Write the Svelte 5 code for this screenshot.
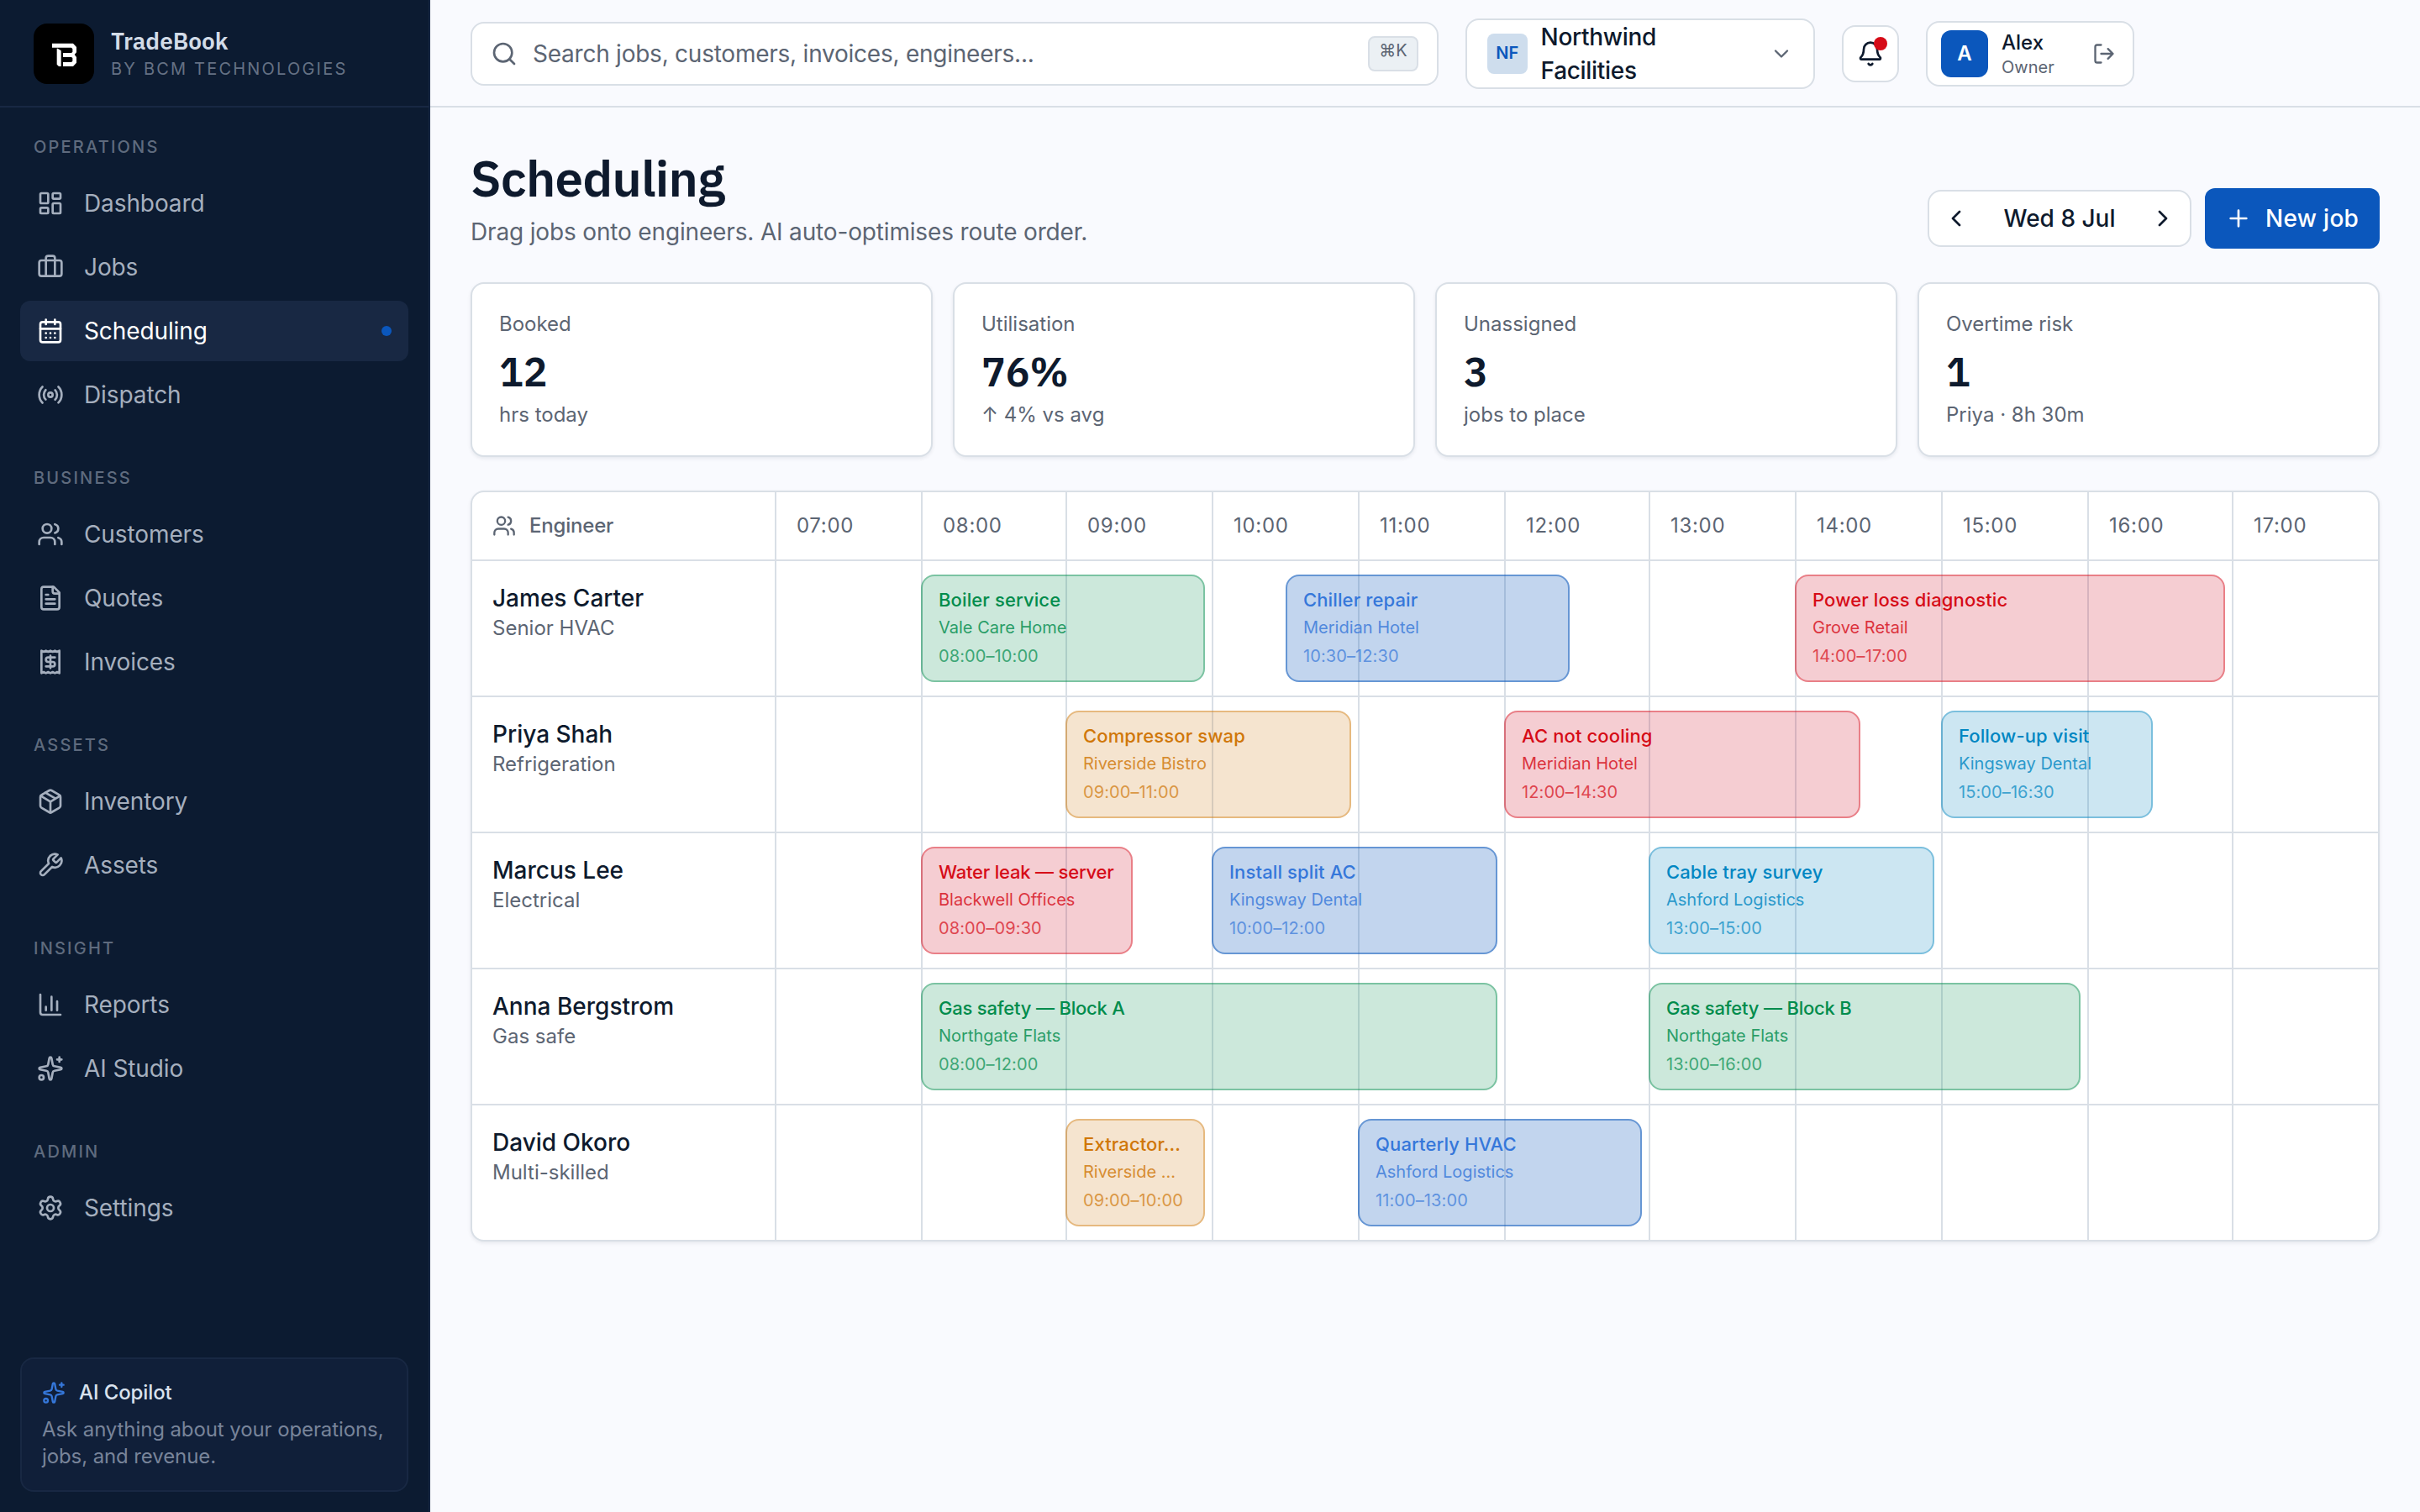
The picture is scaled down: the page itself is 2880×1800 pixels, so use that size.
<script lang="ts">
	const icons: Record<string, string> = {
		dashboard:
			'<rect width="7" height="9" x="3" y="3" rx="1"/><rect width="7" height="5" x="14" y="3" rx="1"/><rect width="7" height="9" x="14" y="12" rx="1"/><rect width="7" height="5" x="3" y="16" rx="1"/>',
		jobs: '<path d="M16 20V4a2 2 0 0 0-2-2h-4a2 2 0 0 0-2 2v16"/><rect width="20" height="14" x="2" y="6" rx="2"/>',
		calendar:
			'<rect width="18" height="18" x="3" y="4" rx="2"/><path d="M16 2v4M3 10h18M8 2v4M8 14h.01M12 14h.01M16 14h.01M8 18h.01M12 18h.01M16 18h.01"/>',
		radio:
			'<path d="M4.9 19.1C1 15.2 1 8.8 4.9 4.9M7.8 16.2c-2.3-2.3-2.3-6.1 0-8.5"/><circle cx="12" cy="12" r="2"/><path d="M16.2 7.8c2.3 2.3 2.3 6.1 0 8.5M19.1 4.9C23 8.8 23 15.1 19.1 19"/>',
		users:
			'<path d="M16 21v-2a4 4 0 0 0-4-4H6a4 4 0 0 0-4 4v2"/><circle cx="9" cy="7" r="4"/><path d="M22 21v-2a4 4 0 0 0-3-3.87M16 3.13a4 4 0 0 1 0 7.75"/>',
		file: '<path d="M15 2H6a2 2 0 0 0-2 2v16a2 2 0 0 0 2 2h12a2 2 0 0 0 2-2V7Z"/><path d="M14 2v4a2 2 0 0 0 2 2h4"/><path d="M10 9H8M16 13H8M16 17H8"/>',
		receipt:
			'<path d="M4 2v20l2-1 2 1 2-1 2 1 2-1 2 1 2-1 2 1V2l-2 1-2-1-2 1-2-1-2 1-2-1-2 1Z"/><path d="M16 8h-6a2 2 0 1 0 0 4h4a2 2 0 1 1 0 4H8M12 17.5v-11"/>',
		box: '<path d="M11 21.73a2 2 0 0 0 2 0l7-4A2 2 0 0 0 21 16V8a2 2 0 0 0-1-1.73l-7-4a2 2 0 0 0-2 0l-7 4A2 2 0 0 0 3 8v8a2 2 0 0 0 1 1.73z"/><path d="M12 22V12"/><path d="m3.3 7 7.703 4.734a2 2 0 0 0 1.994 0L20.7 7M7.5 4.27l9 5.15"/>',
		wrench:
			'<path d="M14.7 6.3a1 1 0 0 0 0 1.4l1.6 1.6a1 1 0 0 0 1.4 0l3.77-3.77a6 6 0 0 1-7.94 7.94l-6.91 6.91a2.12 2.12 0 0 1-3-3l6.91-6.91a6 6 0 0 1 7.94-7.94l-3.76 3.76z"/>',
		chart: '<path d="M3 3v16a2 2 0 0 0 2 2h16M18 17V9M13 17V5M8 17v-3"/>',
		sparkles:
			'<path d="M11.017 2.814a1 1 0 0 1 1.966 0l1.051 5.558a2 2 0 0 0 1.594 1.594l5.558 1.051a1 1 0 0 1 0 1.966l-5.558 1.051a2 2 0 0 0-1.594 1.594l-1.051 5.558a1 1 0 0 1-1.966 0l-1.051-5.558a2 2 0 0 0-1.594-1.594l-5.558-1.051a1 1 0 0 1 0-1.966l5.558-1.051a2 2 0 0 0 1.594-1.594z"/><path d="M20 2v4M22 4h-4"/><circle cx="4" cy="20" r="2"/>',
		settings:
			'<path d="M9.671 4.136a2.34 2.34 0 0 1 4.659 0 2.34 2.34 0 0 0 3.319 1.915 2.34 2.34 0 0 1 2.33 4.033 2.34 2.34 0 0 0 0 3.831 2.34 2.34 0 0 1-2.33 4.033 2.34 2.34 0 0 0-3.319 1.915 2.34 2.34 0 0 1-4.659 0 2.34 2.34 0 0 0-3.32-1.915 2.34 2.34 0 0 1-2.33-4.033 2.34 2.34 0 0 0 0-3.831A2.34 2.34 0 0 1 6.35 6.051a2.34 2.34 0 0 0 3.319-1.915"/><circle cx="12" cy="12" r="3"/>',
		search: '<path d="m21 21-4.34-4.34"/><circle cx="11" cy="11" r="8"/>',
		down: '<path d="m6 9 6 6 6-6"/>',
		left: '<path d="m15 18-6-6 6-6"/>',
		right: '<path d="m9 18 6-6-6-6"/>',
		plus: '<path d="M5 12h14M12 5v14"/>',
		bell: '<path d="M10.268 21a2 2 0 0 0 3.464 0"/><path d="M3.262 15.326A1 1 0 0 0 4 17h16a1 1 0 0 0 .74-1.673C19.41 13.956 18 12.499 18 8A6 6 0 0 0 6 8c0 4.499-1.411 5.956-2.738 7.326"/>',
		logout: '<path d="m16 17 5-5-5-5M21 12H9M9 21H5a2 2 0 0 1-2-2V5a2 2 0 0 1 2-2h4"/>'
	};

	const sections = [
		{
			title: 'Operations',
			items: [
				{ label: 'Dashboard', icon: 'dashboard' },
				{ label: 'Jobs', icon: 'jobs' },
				{ label: 'Scheduling', icon: 'calendar' },
				{ label: 'Dispatch', icon: 'radio' }
			]
		},
		{
			title: 'Business',
			items: [
				{ label: 'Customers', icon: 'users' },
				{ label: 'Quotes', icon: 'file' },
				{ label: 'Invoices', icon: 'receipt' }
			]
		},
		{
			title: 'Assets',
			items: [
				{ label: 'Inventory', icon: 'box' },
				{ label: 'Assets', icon: 'wrench' }
			]
		},
		{
			title: 'Insight',
			items: [
				{ label: 'Reports', icon: 'chart' },
				{ label: 'AI Studio', icon: 'sparkles' }
			]
		},
		{ title: 'Admin', items: [{ label: 'Settings', icon: 'settings' }] }
	];

	const stats = [
		{ label: 'Booked', value: '12', note: 'hrs today' },
		{ label: 'Utilisation', value: '76%', note: '↑ 4% vs avg' },
		{ label: 'Unassigned', value: '3', note: 'jobs to place' },
		{ label: 'Overtime risk', value: '1', note: 'Priya · 8h 30m' }
	];

	const firstHour = 7;
	const trackWidth = 1908;
	const hours = Array.from({ length: 11 }, (_, i) => firstHour + i);

	const engineers = [
		{
			name: 'James Carter',
			role: 'Senior HVAC',
			jobs: [
				{ title: 'Boiler service', client: 'Vale Care Home', start: 8, end: 10, tone: 'green' },
				{ title: 'Chiller repair', client: 'Meridian Hotel', start: 10.5, end: 12.5, tone: 'blue' },
				{ title: 'Power loss diagnostic', client: 'Grove Retail', start: 14, end: 17, tone: 'red' }
			]
		},
		{
			name: 'Priya Shah',
			role: 'Refrigeration',
			jobs: [
				{ title: 'Compressor swap', client: 'Riverside Bistro', start: 9, end: 11, tone: 'orange' },
				{ title: 'AC not cooling', client: 'Meridian Hotel', start: 12, end: 14.5, tone: 'red' },
				{ title: 'Follow-up visit', client: 'Kingsway Dental', start: 15, end: 16.5, tone: 'cyan' }
			]
		},
		{
			name: 'Marcus Lee',
			role: 'Electrical',
			jobs: [
				{ title: 'Water leak — server', client: 'Blackwell Offices', start: 8, end: 9.5, tone: 'red' },
				{ title: 'Install split AC', client: 'Kingsway Dental', start: 10, end: 12, tone: 'blue' },
				{ title: 'Cable tray survey', client: 'Ashford Logistics', start: 13, end: 15, tone: 'cyan' }
			]
		},
		{
			name: 'Anna Bergstrom',
			role: 'Gas safe',
			jobs: [
				{ title: 'Gas safety — Block A', client: 'Northgate Flats', start: 8, end: 12, tone: 'green' },
				{ title: 'Gas safety — Block B', client: 'Northgate Flats', start: 13, end: 16, tone: 'green' }
			]
		},
		{
			name: 'David Okoro',
			role: 'Multi-skilled',
			jobs: [
				{ title: 'Extractor...', client: 'Riverside ...', start: 9, end: 10, tone: 'orange' },
				{ title: 'Quarterly HVAC', client: 'Ashford Logistics', start: 11, end: 13, tone: 'blue' }
			]
		}
	];

	let active = 'Scheduling';

	function clock(h: number) {
		const hh = String(Math.floor(h)).padStart(2, '0');
		return `${hh}:${h % 1 ? '30' : '00'}`;
	}

	// x of an hour on the track, kept on even pixels so the 2px lines stay sharp
	function x(h: number, offset = 0) {
		return 2 * Math.round((((h - firstHour) * trackWidth) / hours.length + offset) / 2);
	}

	const columns = hours.map((h) => `${x(h + 1) - x(h)}px`).join(' ');
</script>

{#snippet icon(name: string, size: number, stroke = 2)}
	<svg
		width={size}
		height={size}
		viewBox="0 0 24 24"
		fill="none"
		stroke="currentColor"
		stroke-width={stroke}
		stroke-linecap="round"
		stroke-linejoin="round"
		aria-hidden="true"
	>
		{@html icons[name]}
	</svg>
{/snippet}

<div class="app">
	<aside>
		<div class="brand">
			<svg class="logo" viewBox="0 0 216 216" aria-hidden="true">
				<path
					d="M66 71h75l12 13v19l-7 8 7 9v20l-12 13h-36v-15h30l4-4v-11l-4-3h-30v-15h30l4-3v-11l-4-5H66z M83 89h3l12 8v56h-8l-7-7z"
				/>
			</svg>
			<div>
				<div class="brand-name">TradeBook</div>
				<div class="brand-sub">BY BCM TECHNOLOGIES</div>
			</div>
		</div>

		<nav>
			{#each sections as section}
				<div class="section">
					<div class="section-title">{section.title}</div>
					{#each section.items as item}
						<button
							class="nav-item"
							class:active={active === item.label}
							on:click={() => (active = item.label)}
						>
							{@render icon(item.icon, 32)}
							<span>{item.label}</span>
							{#if active === item.label}
								<i class="dot"></i>
							{/if}
						</button>
					{/each}
				</div>
			{/each}
		</nav>

		<div class="copilot">
			<div class="copilot-title">
				{@render icon('sparkles', 28)}
				<span>AI Copilot</span>
			</div>
			<p>Ask anything about your operations, jobs, and revenue.</p>
		</div>
	</aside>

	<div class="page">
		<header>
			<div class="search">
				{@render icon('search', 32)}
				<span>Search jobs, customers, invoices, engineers...</span>
				<kbd>⌘K</kbd>
			</div>
			<button class="company">
				<span class="initials">NF</span>
				<span>Northwind Facilities</span>
				{@render icon('down', 28)}
			</button>
			<button class="bell" aria-label="Notifications">
				{@render icon('bell', 32)}
				<i class="badge"></i>
			</button>
			<div class="user">
				<span class="avatar">A</span>
				<div class="user-text">
					<div class="user-name">Alex</div>
					<div class="user-role">Owner</div>
				</div>
				{@render icon('logout', 28)}
			</div>
		</header>

		<main>
			<div class="heading">
				<div>
					<h1>Scheduling</h1>
					<p>Drag jobs onto engineers. AI auto-optimises route order.</p>
				</div>
				<div class="actions">
					<div class="date">
						{@render icon('left', 32)}
						<span>Wed 8 Jul</span>
						{@render icon('right', 32)}
					</div>
					<button class="new-job">
						{@render icon('plus', 32)}
						<span>New job</span>
					</button>
				</div>
			</div>

			<div class="stats">
				{#each stats as stat}
					<div class="stat">
						<div class="stat-label">{stat.label}</div>
						<div class="stat-value">{stat.value}</div>
						<div class="stat-label">{stat.note}</div>
					</div>
				{/each}
			</div>

			<div class="board">
				<div class="board-head" style="grid-template-columns: 360px {columns}">
					<div class="engineer-head">
						{@render icon('users', 28)}
						<span>Engineer</span>
					</div>
					{#each hours as hour}
						<div class="hour">{clock(hour)}</div>
					{/each}
				</div>
				{#each engineers as engineer}
					<div class="row">
						<div class="engineer">
							<div class="name">{engineer.name}</div>
							<div class="role">{engineer.role}</div>
						</div>
						<div class="track" style="grid-template-columns: {columns}">
							{#each hours as hour (hour)}
								<div class="slot"></div>
							{/each}
							{#each engineer.jobs as job}
								<div
									class="job {job.tone}"
									style="left: {x(job.start)}px; width: {x(job.end, -8) - x(job.start)}px"
								>
									<div class="job-title" class:tight={job.title.includes('—')}>{job.title}</div>
									<div class="job-client">{job.client}</div>
									<div class="job-time">{clock(job.start)}–{clock(job.end)}</div>
								</div>
							{/each}
						</div>
					</div>
				{/each}
			</div>
		</main>
	</div>
</div>

<style>
	:global(body) {
		background: #f9fafe;
	}

	.app {
		display: flex;
		height: 1800px;
		font-family: Inter, 'Liberation Sans', sans-serif;
		font-size: 28px;
		line-height: 40px;
		color: #0e1a2d;
		background: #f9fafe;
	}

	.app * {
		box-sizing: border-box;
	}

	svg {
		display: block;
		flex: none;
	}

	button {
		font: inherit;
		color: inherit;
		background: none;
		border: 0;
		padding: 0;
		margin: 0;
		text-align: left;
		cursor: pointer;
	}

	p,
	h1 {
		margin: 0;
	}

	aside {
		display: flex;
		flex-direction: column;
		flex: none;
		width: 512px;
		background: #0c1b31;
		border-right: 2px solid #182843;
	}

	.brand {
		display: flex;
		align-items: center;
		gap: 20px;
		height: 128px;
		padding: 2px 40px 0;
		border-bottom: 2px solid #182843;
	}

	.logo {
		width: 72px;
		height: 72px;
		border-radius: 16px;
		background: #000;
		fill: #fff;
	}

	.brand-name {
		font-family: 'IBM Plex Sans', 'Noto Sans', sans-serif;
		font-weight: 600;
		line-height: 35px;
		color: #d3dce8;
	}

	.brand-sub {
		padding-top: 1px;
		font-size: 20px;
		line-height: 30px;
		letter-spacing: 2.2px;
		color: #657184;
	}

	nav {
		display: flex;
		flex-direction: column;
		flex: 1;
		gap: 48px;
		padding: 32px 24px;
	}

	.section {
		display: flex;
		flex-direction: column;
		gap: 4px;
	}

	.section-title {
		padding: 0 16px;
		margin-bottom: 12px;
		font-size: 20px;
		font-weight: 500;
		line-height: 30px;
		letter-spacing: 2.2px;
		text-transform: uppercase;
		color: #5f6b7e;
	}

	.nav-item {
		display: flex;
		align-items: center;
		gap: 24px;
		height: 72px;
		padding: 0 20px;
		border-radius: 12px;
		letter-spacing: -0.1px;
		color: #a5afbe;
	}

	.nav-item.active {
		background: #182843;
		color: #fff;
	}

	.dot {
		width: 12px;
		height: 12px;
		margin-left: auto;
		border-radius: 50%;
		background: #0b57bc;
	}

	.copilot {
		height: 160px;
		margin: 0 24px 24px;
		padding: 20px 24px;
		border: 2px solid #182843;
		border-radius: 16px;
		background: #101f39;
	}

	.copilot-title {
		display: flex;
		align-items: center;
		gap: 16px;
		font-size: 24px;
		font-weight: 500;
		letter-spacing: -0.1px;
		color: #d9e2ee;
	}

	.copilot-title svg {
		color: #3577da;
	}

	.copilot p {
		margin-top: 8px;
		font-size: 24px;
		line-height: 32px;
		letter-spacing: -0.1px;
		color: #78849a;
	}

	.page {
		flex: 1;
		min-width: 0;
	}

	header {
		display: flex;
		align-items: center;
		gap: 32px;
		height: 128px;
		padding: 2px 48px 0;
		border-bottom: 2px solid #d9dfe6;
	}

	.search,
	.company,
	.bell,
	.user,
	.date,
	.stat,
	.board {
		border: 2px solid #d9dfe6;
		background: #fff;
	}

	.search {
		display: flex;
		align-items: center;
		gap: 18px;
		width: 1152px;
		height: 76px;
		padding: 0 22px;
		border-radius: 16px;
		letter-spacing: -0.24px;
		color: #5c6573;
	}

	.search kbd {
		width: 60px;
		height: 42px;
		margin-left: auto;
		border: 2px solid #d9dfe6;
		border-radius: 8px;
		background: #ebf0f4;
		font-family: Inter, sans-serif;
		font-size: 20px;
		line-height: 30px;
		letter-spacing: 0;
		text-align: center;
	}

	.company {
		display: flex;
		align-items: center;
		gap: 16px;
		width: 416px;
		height: 84px;
		padding: 0 24px;
		border-radius: 16px;
		font-weight: 450;
		letter-spacing: -0.3px;
	}

	.company svg {
		margin-left: auto;
		color: #5c6573;
	}

	.initials {
		width: 48px;
		height: 48px;
		border-radius: 8px;
		background: #cedded;
		color: #0b57bc;
		font-size: 20px;
		font-weight: 600;
		line-height: 46px;
		letter-spacing: 0;
		text-align: center;
	}

	.bell {
		display: grid;
		place-items: center;
		position: relative;
		width: 68px;
		height: 68px;
		border-radius: 16px;
	}

	.badge {
		position: absolute;
		top: 12px;
		right: 12px;
		width: 16px;
		height: 16px;
		border-radius: 50%;
		background: #d60b17;
	}

	.user {
		display: flex;
		align-items: center;
		width: 248px;
		height: 78px;
		padding: 0 20px 0 16px;
		border-radius: 16px;
	}

	.avatar {
		width: 56px;
		height: 56px;
		margin-right: 16px;
		border-radius: 12px;
		background: #0b57bc;
		color: #fff;
		font-size: 24px;
		font-weight: 600;
		line-height: 56px;
		text-align: center;
	}

	.user-text {
		padding-top: 1px;
	}

	.user-name {
		font-size: 24px;
		font-weight: 450;
		line-height: 30px;
	}

	.user-role {
		font-size: 20px;
		line-height: 28px;
		color: #5c6573;
	}

	.user svg {
		margin-left: auto;
		color: #5c6573;
	}

	main {
		padding: 48px;
	}

	.heading {
		display: flex;
		align-items: flex-end;
		justify-content: space-between;
		height: 120px;
	}

	h1 {
		font-family: 'IBM Plex Sans', 'Noto Sans', sans-serif;
		font-size: 60px;
		font-weight: 600;
		line-height: 72px;
		letter-spacing: -0.75px;
	}

	.heading p {
		margin-top: 8px;
		letter-spacing: -0.16px;
		color: #5c6573;
	}

	.actions {
		display: flex;
		align-items: center;
		gap: 16px;
	}

	.date {
		display: flex;
		align-items: center;
		justify-content: space-between;
		width: 314px;
		height: 68px;
		padding: 0 16px;
		border-radius: 16px;
		font-weight: 450;
	}

	.new-job {
		display: flex;
		align-items: center;
		gap: 16px;
		width: 208px;
		height: 72px;
		padding: 0 24px;
		border-radius: 12px;
		background: #0b57bc;
		color: #fff;
		font-weight: 450;
		letter-spacing: 0.3px;
	}

	.stats {
		display: grid;
		grid-template-columns: repeat(4, 1fr);
		gap: 24px;
		margin-top: 40px;
	}

	.stat {
		height: 208px;
		padding: 32px;
		border-radius: 16px;
		box-shadow: 0 2px 4px rgba(14, 26, 45, 0.08);
	}

	.stat-label {
		font-size: 24px;
		line-height: 32px;
		color: #5c6573;
	}

	.stat-value {
		margin: 8px 0 4px;
		font-family: 'IBM Plex Sans', 'Noto Sans', sans-serif;
		font-size: 48px;
		font-weight: 600;
		line-height: 64px;
	}

	.board {
		margin-top: 40px;
		border-radius: 16px;
		overflow: hidden;
		box-shadow: 0 2px 4px rgba(14, 26, 45, 0.08);
	}

	.board-head {
		display: grid;
		height: 82px;
		border-bottom: 2px solid #d9dfe6;
		font-size: 24px;
		line-height: 80px;
		color: #5c6573;
	}

	.engineer-head {
		display: flex;
		align-items: center;
		gap: 16px;
		padding: 0 24px;
		font-weight: 500;
		letter-spacing: -0.2px;
	}

	.hour {
		padding: 0 24px;
		border-left: 2px solid #d9dfe6;
		letter-spacing: 0.7px;
	}

	.row {
		display: grid;
		grid-template-columns: 360px 1fr;
		height: 162px;
		border-bottom: 2px solid #d9dfe6;
	}

	.row:last-child {
		height: 160px;
		border-bottom: 0;
	}

	.engineer {
		padding: 24px;
	}

	.name {
		font-weight: 450;
	}

	.role {
		font-size: 24px;
		line-height: 32px;
		color: #5c6573;
	}

	.track {
		display: grid;
		position: relative;
	}

	.slot {
		border-left: 2px solid #d9dfe6;
	}

	/* jobs lie over the hour slots, placed by start time */
	.job {
		position: absolute;
		top: 16px;
		bottom: 16px;
		padding: 12px 18px 12px 19px;
		border: 2px solid;
		border-radius: 16px;
		overflow: hidden;
	}

	.job div {
		overflow: hidden;
		white-space: nowrap;
		text-overflow: ellipsis;
	}

	.job-title {
		font-size: 22px;
		font-weight: 500;
		line-height: 33px;
		letter-spacing: 0.12px;
	}

	.job-title.tight {
		letter-spacing: -0.2px;
	}

	.job-client {
		font-size: 20px;
		line-height: 33px;
		opacity: 0.8;
	}

	.job-time {
		font-size: 20px;
		line-height: 35px;
		letter-spacing: 0.1px;
		opacity: 0.7;
	}

	.green {
		color: #008c4c;
		background: rgba(0, 140, 76, 0.2);
		border-color: rgba(0, 140, 76, 0.4);
	}

	.blue {
		color: #3577da;
		background: rgba(11, 87, 188, 0.25);
		border-color: rgba(11, 87, 188, 0.5);
	}

	.red {
		color: #d60b17;
		background: rgba(207, 7, 30, 0.2);
		border-color: rgba(214, 11, 23, 0.4);
	}

	.orange {
		color: #d07708;
		background: rgba(204, 119, 17, 0.2);
		border-color: rgba(208, 119, 8, 0.4);
	}

	.cyan {
		color: #0086c2;
		background: rgba(0, 132, 191, 0.2);
		border-color: rgba(0, 132, 191, 0.4);
	}
</style>
